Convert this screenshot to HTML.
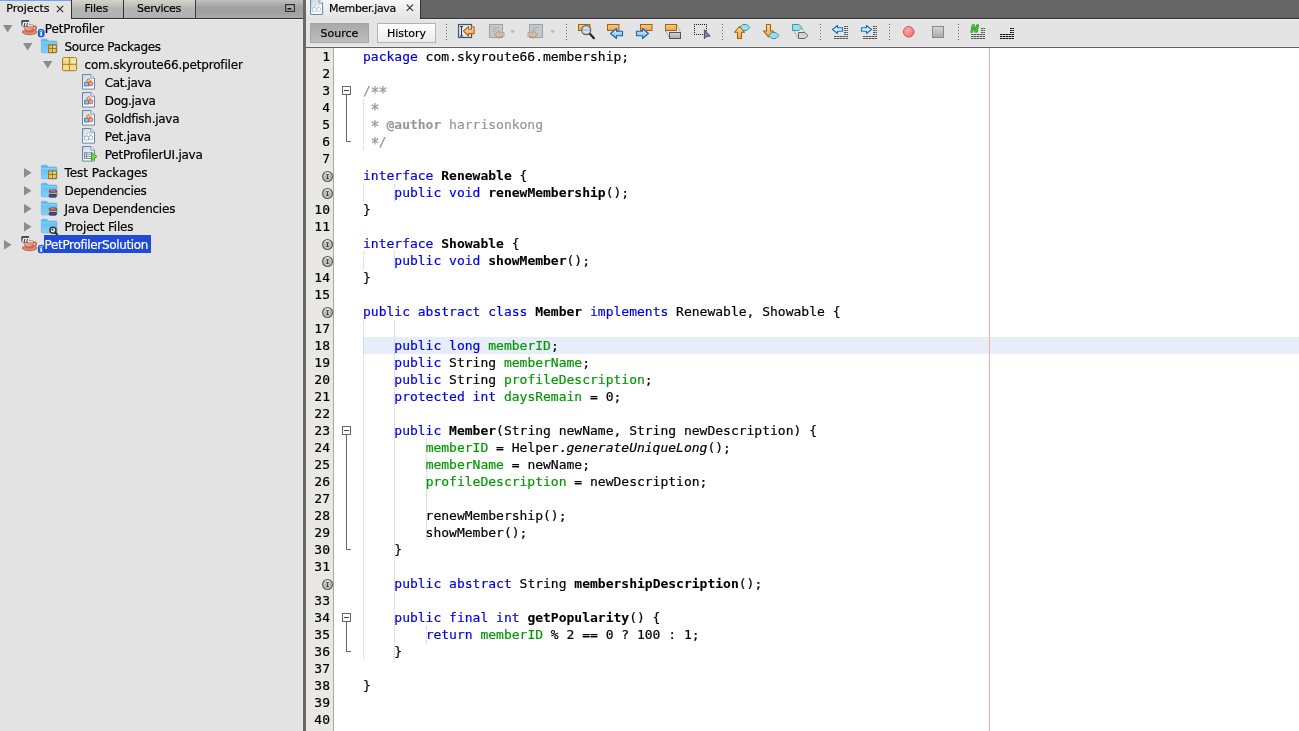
<!DOCTYPE html>
<html><head><meta charset="utf-8"><title>Member.java</title>
<style>
html,body{margin:0;padding:0}
body{width:1299px;height:731px;position:relative;overflow:hidden;background:#fff;-webkit-font-smoothing:antialiased;-webkit-text-stroke:0.2px;font-family:"DejaVu Sans","Liberation Sans",sans-serif}
.ab{position:absolute;display:block}
i{position:absolute;display:block}
#root{position:absolute;left:0;top:0;width:1299px;height:731px;will-change:transform}
#left{position:absolute;left:0;top:0;width:303px;height:731px;background:linear-gradient(#e3e3e3,#e3e3e3)}
#lhl{position:absolute;left:71px;top:19px;width:232px;height:1px;background:#eee}
#ltabs{position:absolute;left:0;top:0;width:303px;height:19px;background:linear-gradient(#c0c0c0 0,#a0a0a0 40%,#a1a1a1 70%,#aaa 100%);box-sizing:border-box;border-bottom:1px solid #333}
.tab{position:absolute;top:0;height:18px;box-sizing:border-box;font-size:11px;line-height:16px;color:#000;background:linear-gradient(#d3d4c5 0,#c5c5bd 25%,#b4b4b3 46%,#b2b2b2 100%);border-left:1px solid #333}
.tab span{position:absolute;top:1px;white-space:nowrap}
#tabP{left:0;width:71px;height:19px;background:#e3e3e3;border:0;border-top:1px solid #6ea4ec}
.tl{position:absolute;height:18px;line-height:18px;font-size:12px;white-space:nowrap;color:#000;letter-spacing:-0.28px}
.tl.sel{color:#fff}
.selbg{left:44px;top:235px;width:107px;height:18px;background:#1f4bd8}
#div{position:absolute;left:303px;top:0;width:3px;height:731px;background:#676767}
#etabs{position:absolute;left:306px;top:0;width:993px;height:19px;background:#666;box-sizing:border-box;border-bottom:1px solid #333}
#etab{position:absolute;left:0;top:0;width:114px;height:19px;background:linear-gradient(#f6f6f6,#e4e4e4);font-size:11px;border-right:1px solid #333}
#tbar{position:absolute;left:306px;top:19px;width:993px;height:29px;background:#e4e4e4;box-sizing:border-box;border-bottom:1px solid #606060;box-shadow:inset 0 -1px 0 #ebebeb}
.btn{position:absolute;top:23px;height:20px;box-sizing:border-box;border:1px solid #b4b4b4;font-size:11px;line-height:20px;text-align:center;color:#000}
#gut{position:absolute;left:306px;top:48px;width:28px;height:683px;background:#e9e8e2;overflow:visible;box-sizing:border-box;border-right:1px solid #aaa9a4}
.no{height:17px;line-height:17px;font:13px/17px "DejaVu Sans Mono","Liberation Mono",monospace;text-align:right;padding-right:3px;color:#000;position:relative}
.ii{position:absolute;left:16px;top:4px;overflow:visible;-webkit-text-stroke:0}
#code{position:absolute;left:363px;top:48px;width:936px;height:683px;font:13px/17px "DejaVu Sans Mono","Liberation Mono",monospace;color:#000;white-space:pre}
.ln{height:17px}
.hl{background:#e8eef9}
.k{color:#0000e6} .f{color:#009900} .c{color:#969696} .cb{color:#969696;font-weight:bold;-webkit-text-stroke:0.1px} .b{font-weight:bold;-webkit-text-stroke:0.1px} .i{font-style:italic}
.a{display:inline-block;transform:translateY(2px) scale(1.15)}
.g{width:1px;background:repeating-linear-gradient(#c9c9c9 0 1px,transparent 1px 2px)}
.fb{left:342px;width:9px;height:9px;box-sizing:border-box;border:1px solid #666;background:#fff}
.fb b{position:absolute;left:1px;top:3px;width:5px;height:1px;background:#444}
.fv{left:346px;width:1px;background:#666}
.fh{left:346px;width:5px;height:1px;background:#666}
#margin{position:absolute;left:989px;top:48px;width:1px;height:683px;background:#ffa9a9}
</style></head><body><div id="root">
<div id="left">
 <div id="ltabs">
  <div class="tab" id="tabP"><span style="left:6.200px;top:0">Projects</span><svg class="ab" style="left:56px;top:4px" width="8" height="8"><path d="M.8.8l6.4 6.4M7.2.8L.8 7.2" stroke="#333" stroke-width="1.2"/></svg></div>
  <div class="tab" style="left:71px;width:52px"><span style="left:12.5px;letter-spacing:-0.1px">Files</span></div>
  <div class="tab" style="left:123px;width:73px;border-right:1px solid #3c3c3c"><span style="left:13px;letter-spacing:-0.3px">Services</span></div>
  <svg class="ab" style="left:285px;top:4px" width="11" height="9"><rect x=".600" y=".600" width="8.800" height="6.800" fill="#adadad" stroke="#333" stroke-width="1.200"/><rect x="2.400" y="4" width="4" height="1.600" fill="#1c1c1c"/></svg>
 </div>
 <i id="lhl"></i><i class="selbg"></i><svg class="ab" style="left:3px;top:25px" width="10" height="8"><path d="M0 0h9.4L4.7 7.6z" fill="#8c8c8c"/></svg><span class="ab" style="left:20px;top:19px"><svg width="26" height="19" viewBox="0 0 26 19"><defs><linearGradient id="cupg" x1="0" y1="0" x2="1" y2="1"><stop offset="0" stop-color="#f6c3ae"/><stop offset="1" stop-color="#d9775a"/></linearGradient></defs><ellipse cx="9.6" cy="13" rx="7.2" ry="2.7" fill="#e08c70" stroke="#b05a40" stroke-width=".8"/><ellipse cx="9.4" cy="12.2" rx="4.2" ry="1.4" fill="#c86a4e"/><path d="M4.2 6.6h9.6c.3 3.2-1.2 5.8-4.8 5.8s-5.1-2.600-4.800-5.800z" fill="url(#cupg)" stroke="#b05a40" stroke-width=".8"/><path d="M13.6 7.400c3.200-.9 4 2.600.3 3.700" fill="none" stroke="#c0664a" stroke-width="1.500"/><ellipse cx="9" cy="6.700" rx="4.700" ry="1.200" fill="#f9dccf" stroke="#b05a40" stroke-width=".6"/><rect x="1.300" y="1" width="8" height="6.400" rx="1.400" fill="#3d4759"/><text x="2" y="6.600" font-family="DejaVu Sans,Liberation Sans,sans-serif" font-size="7.500" font-weight="bold" font-style="italic" fill="#fff" stroke="none">m</text><rect x="18.400" y="10.500" width="5.600" height="7.300" rx="1.800" fill="#2a6ee6" stroke="#0f48c0" stroke-width="1"/><ellipse cx="21.200" cy="11.800" rx="2" ry=".8" fill="#9cc4ff"/><rect x="20.300" y="13" width="1.700" height="3.800" fill="#e6f0ff"/></svg></span><span class="tl" style="left:44.8px;top:20px;letter-spacing:-0.18px">PetProfiler</span><svg class="ab" style="left:23px;top:43px" width="10" height="8"><path d="M0 0h9.4L4.7 7.6z" fill="#8c8c8c"/></svg><span class="ab" style="left:40px;top:37px"><svg width="18" height="18" viewBox="0 0 18 18"><defs><linearGradient id="fog" x1="0" y1="0" x2="0" y2="1"><stop offset="0" stop-color="#5ab9f2"/><stop offset="1" stop-color="#84d0f8"/></linearGradient></defs><path d="M1.300 3.400q0-1.200 1.200-1.200h3.800q.8 0 1.300.8l.7 1h7.500q1.200 0 1.200 1.200v9.400q0 1.200-1.200 1.200H2.500q-1.200 0-1.200-1.200z" fill="url(#fog)" stroke="#58b2ea" stroke-width=".6"/><path d="M1.700 5.300h14.900v.9H1.700z" fill="#93d6f9"/><rect x="8.700" y="8" width="7.600" height="7.600" fill="#eccb68" stroke="#94690f" stroke-width="1"/><path d="M12.500 8v7.600M8.700 11.400h7.600" stroke="#94690f" stroke-width=".9"/><rect x="13.500" y="9.300" width="2" height="1" fill="#fff6d0"/></svg></span><span class="tl" style="left:64.5px;top:38px;letter-spacing:-0.32px">Source Packages</span><svg class="ab" style="left:43px;top:61px" width="10" height="8"><path d="M0 0h9.4L4.7 7.6z" fill="#8c8c8c"/></svg><span class="ab" style="left:60px;top:55px"><svg width="19" height="18" viewBox="0 0 19 18"><defs><linearGradient id="pkg" x1="0" y1="0" x2="0" y2="1"><stop offset="0" stop-color="#f2d47c"/><stop offset="1" stop-color="#f6e0a0"/></linearGradient></defs><rect x="2.600" y="2.700" width="14" height="13" rx="1" fill="url(#pkg)" stroke="#a07c1c" stroke-width="1"/><path d="M9.400 2.700v13M2.600 9.300h14" stroke="#a8841f" stroke-width="1"/><path d="M3.400 3.600h5.300v1.200H3.400zM10.100 3.600h5.800v1.200h-5.800z" fill="#fbecb8"/><rect x="12" y="6.300" width="3" height="1.500" fill="#fffbe8"/></svg></span><span class="tl" style="left:84.5px;top:56px;letter-spacing:-0.17px">com.skyroute66.petprofiler</span><span class="ab" style="left:80px;top:73px"><svg width="18" height="18" viewBox="0 0 18 18"><defs><linearGradient id="fig" x1="0" y1="0" x2=".6" y2="1"><stop offset="0" stop-color="#c3d4e9"/><stop offset=".75" stop-color="#fbfcfe"/></linearGradient></defs><path d="M2.500 1.500h8.300l3.700 3.700v10.900h-12z" fill="url(#fig)" stroke="#6c83a3" stroke-width="1"/><path d="M10.800 1.500v3.700h3.700" fill="#eef3f9" stroke="#6c83a3" stroke-width=".8"/><rect x="4.700" y="9.200" width="4" height="3.800" fill="#8cc0f0" stroke="#3a6a9c" stroke-width=".8"/><path d="M8.500 5.300l2.300 2.300-2.300 2.300-2.300-2.300z" fill="#f9c860" stroke="#b06a14" stroke-width=".9"/><circle cx="10.800" cy="10.700" r="2.100" fill="#f4a0a0" stroke="#c84848" stroke-width=".8"/></svg></span><span class="tl" style="left:104.8px;top:74px;letter-spacing:-0.38px">Cat.java</span><span class="ab" style="left:80px;top:91px"><svg width="18" height="18" viewBox="0 0 18 18"><defs><linearGradient id="fig" x1="0" y1="0" x2=".6" y2="1"><stop offset="0" stop-color="#c3d4e9"/><stop offset=".75" stop-color="#fbfcfe"/></linearGradient></defs><path d="M2.500 1.500h8.300l3.700 3.700v10.900h-12z" fill="url(#fig)" stroke="#6c83a3" stroke-width="1"/><path d="M10.800 1.500v3.700h3.700" fill="#eef3f9" stroke="#6c83a3" stroke-width=".8"/><rect x="4.700" y="9.200" width="4" height="3.800" fill="#8cc0f0" stroke="#3a6a9c" stroke-width=".8"/><path d="M8.500 5.300l2.300 2.300-2.300 2.300-2.300-2.300z" fill="#f9c860" stroke="#b06a14" stroke-width=".9"/><circle cx="10.800" cy="10.700" r="2.100" fill="#f4a0a0" stroke="#c84848" stroke-width=".8"/></svg></span><span class="tl" style="left:104.8px;top:92px;letter-spacing:-0.31px">Dog.java</span><span class="ab" style="left:80px;top:109px"><svg width="18" height="18" viewBox="0 0 18 18"><defs><linearGradient id="fig" x1="0" y1="0" x2=".6" y2="1"><stop offset="0" stop-color="#c3d4e9"/><stop offset=".75" stop-color="#fbfcfe"/></linearGradient></defs><path d="M2.500 1.500h8.300l3.700 3.700v10.900h-12z" fill="url(#fig)" stroke="#6c83a3" stroke-width="1"/><path d="M10.800 1.500v3.700h3.700" fill="#eef3f9" stroke="#6c83a3" stroke-width=".8"/><rect x="4.700" y="9.200" width="4" height="3.800" fill="#8cc0f0" stroke="#3a6a9c" stroke-width=".8"/><path d="M8.500 5.300l2.300 2.300-2.300 2.300-2.300-2.300z" fill="#f9c860" stroke="#b06a14" stroke-width=".9"/><circle cx="10.800" cy="10.700" r="2.100" fill="#f4a0a0" stroke="#c84848" stroke-width=".8"/></svg></span><span class="tl" style="left:104.8px;top:110px;letter-spacing:-0.27px">Goldfish.java</span><span class="ab" style="left:80px;top:127px"><svg width="18" height="18" viewBox="0 0 18 18"><defs><linearGradient id="fig" x1="0" y1="0" x2=".6" y2="1"><stop offset="0" stop-color="#c3d4e9"/><stop offset=".75" stop-color="#fbfcfe"/></linearGradient></defs><path d="M2.500 1.500h8.300l3.700 3.700v10.900h-12z" fill="url(#fig)" stroke="#6c83a3" stroke-width="1"/><path d="M10.800 1.500v3.700h3.700" fill="#eef3f9" stroke="#6c83a3" stroke-width=".8"/><rect x="4.700" y="9.200" width="4" height="3.800" fill="#f6f9fd" stroke="#93a6bf" stroke-width=".8"/><path d="M8.500 5.300l2.300 2.300-2.300 2.300-2.300-2.300z" fill="#fff" stroke="#93a6bf" stroke-width=".8"/><circle cx="10.800" cy="10.700" r="2.100" fill="#fff" stroke="#93a6bf" stroke-width=".8"/></svg></span><span class="tl" style="left:104.8px;top:128px;letter-spacing:-0.21px">Pet.java</span><span class="ab" style="left:80px;top:145px"><svg width="18" height="18" viewBox="0 0 18 18"><defs><linearGradient id="fig" x1="0" y1="0" x2=".6" y2="1"><stop offset="0" stop-color="#c3d4e9"/><stop offset=".75" stop-color="#fbfcfe"/></linearGradient></defs><path d="M2.500 1.500h8.300l3.700 3.700v10.900h-12z" fill="url(#fig)" stroke="#6c83a3" stroke-width="1"/><path d="M10.800 1.500v3.700h3.700" fill="#eef3f9" stroke="#6c83a3" stroke-width=".8"/><rect x="4.300" y="7.800" width="7.500" height="5.700" fill="#fff" stroke="#5a6f8c" stroke-width=".8"/><path d="M4.300 9.700h7.500M4.300 11.600h7.500M6.600 7.800v5.700" stroke="#5a6f8c" stroke-width=".7"/><path d="M11.600 7.400l5.300 4.100-5.300 4.100z" fill="#7ad83a" stroke="#3c9a14" stroke-width=".9" stroke-linejoin="round"/></svg></span><span class="tl" style="left:104.8px;top:146px;letter-spacing:-0.26px">PetProfilerUI.java</span><svg class="ab" style="left:24px;top:167.6px" width="8" height="10"><path d="M0 0v9.400L7.600 4.700z" fill="#8c8c8c"/></svg><span class="ab" style="left:40px;top:163px"><svg width="18" height="18" viewBox="0 0 18 18"><defs><linearGradient id="fog" x1="0" y1="0" x2="0" y2="1"><stop offset="0" stop-color="#5ab9f2"/><stop offset="1" stop-color="#84d0f8"/></linearGradient></defs><path d="M1.300 3.400q0-1.200 1.200-1.200h3.800q.8 0 1.300.8l.7 1h7.500q1.200 0 1.200 1.200v9.400q0 1.200-1.200 1.200H2.500q-1.200 0-1.200-1.200z" fill="url(#fog)" stroke="#58b2ea" stroke-width=".6"/><path d="M1.700 5.300h14.900v.9H1.700z" fill="#93d6f9"/><rect x="8.700" y="8" width="7.600" height="7.600" fill="#eccb68" stroke="#94690f" stroke-width="1"/><path d="M12.500 8v7.600M8.700 11.400h7.600" stroke="#94690f" stroke-width=".9"/><rect x="13.500" y="9.300" width="2" height="1" fill="#fff6d0"/></svg></span><span class="tl" style="left:64.5px;top:164px;letter-spacing:-0.03px">Test Packages</span><svg class="ab" style="left:24px;top:185.6px" width="8" height="10"><path d="M0 0v9.400L7.600 4.700z" fill="#8c8c8c"/></svg><span class="ab" style="left:40px;top:181px"><svg width="18" height="18" viewBox="0 0 18 18"><defs><linearGradient id="fog" x1="0" y1="0" x2="0" y2="1"><stop offset="0" stop-color="#5ab9f2"/><stop offset="1" stop-color="#84d0f8"/></linearGradient></defs><path d="M1.300 3.400q0-1.200 1.200-1.200h3.800q.8 0 1.300.8l.7 1h7.500q1.200 0 1.200 1.200v9.400q0 1.200-1.200 1.200H2.500q-1.200 0-1.200-1.200z" fill="url(#fog)" stroke="#58b2ea" stroke-width=".6"/><path d="M1.700 5.300h14.900v.9H1.700z" fill="#93d6f9"/><rect x="9.300" y="8.900" width="7.400" height="2.700" rx="1.200" fill="#b04850" stroke="#6a2a32" stroke-width=".7"/><rect x="10" y="11.600" width="7" height="2" rx=".6" fill="#c9b880" stroke="#6a5c30" stroke-width=".7"/><rect x="9" y="13.600" width="7.400" height="2.600" rx="1.200" fill="#3f4f9a" stroke="#232a5a" stroke-width=".7"/><path d="M10.600 9.800h4.600" stroke="#e6b8bc" stroke-width=".7"/></svg></span><span class="tl" style="left:64.5px;top:182px;letter-spacing:-0.28px">Dependencies</span><svg class="ab" style="left:24px;top:203.6px" width="8" height="10"><path d="M0 0v9.400L7.600 4.700z" fill="#8c8c8c"/></svg><span class="ab" style="left:40px;top:199px"><svg width="18" height="18" viewBox="0 0 18 18"><defs><linearGradient id="fog" x1="0" y1="0" x2="0" y2="1"><stop offset="0" stop-color="#5ab9f2"/><stop offset="1" stop-color="#84d0f8"/></linearGradient></defs><path d="M1.300 3.400q0-1.200 1.200-1.200h3.800q.8 0 1.300.8l.7 1h7.500q1.200 0 1.200 1.200v9.400q0 1.200-1.200 1.200H2.500q-1.200 0-1.200-1.200z" fill="url(#fog)" stroke="#58b2ea" stroke-width=".6"/><path d="M1.700 5.300h14.900v.9H1.700z" fill="#93d6f9"/><rect x="9.300" y="8.900" width="7.400" height="2.700" rx="1.200" fill="#b04850" stroke="#6a2a32" stroke-width=".7"/><rect x="10" y="11.600" width="7" height="2" rx=".6" fill="#c9b880" stroke="#6a5c30" stroke-width=".7"/><rect x="9" y="13.600" width="7.400" height="2.600" rx="1.200" fill="#3f4f9a" stroke="#232a5a" stroke-width=".7"/><path d="M10.600 9.800h4.600" stroke="#e6b8bc" stroke-width=".7"/></svg></span><span class="tl" style="left:64.5px;top:200px;letter-spacing:-0.23px">Java Dependencies</span><svg class="ab" style="left:24px;top:221.6px" width="8" height="10"><path d="M0 0v9.400L7.600 4.700z" fill="#8c8c8c"/></svg><span class="ab" style="left:40px;top:217px"><svg width="18" height="18" viewBox="0 0 18 18"><defs><linearGradient id="fog" x1="0" y1="0" x2="0" y2="1"><stop offset="0" stop-color="#5ab9f2"/><stop offset="1" stop-color="#84d0f8"/></linearGradient></defs><path d="M1.300 3.400q0-1.200 1.200-1.200h3.800q.8 0 1.300.8l.7 1h7.500q1.200 0 1.200 1.200v9.400q0 1.200-1.200 1.200H2.500q-1.200 0-1.200-1.200z" fill="url(#fog)" stroke="#58b2ea" stroke-width=".6"/><path d="M1.700 5.300h14.900v.9H1.700z" fill="#93d6f9"/><circle cx="13" cy="13.200" r="3" fill="#fff" stroke="#333" stroke-width="1.500"/><circle cx="12.600" cy="12.800" r="1" fill="#333"/><path d="M15 15.300l2 2" stroke="#333" stroke-width="2.200" stroke-linecap="round"/></svg></span><span class="tl" style="left:64.5px;top:218px;letter-spacing:-0.18px">Project Files</span><svg class="ab" style="left:4px;top:239.6px" width="8" height="10"><path d="M0 0v9.400L7.600 4.700z" fill="#8c8c8c"/></svg><span class="ab" style="left:20px;top:235px"><svg width="26" height="19" viewBox="0 0 26 19"><defs><linearGradient id="cupg" x1="0" y1="0" x2="1" y2="1"><stop offset="0" stop-color="#f6c3ae"/><stop offset="1" stop-color="#d9775a"/></linearGradient></defs><ellipse cx="9.6" cy="13" rx="7.2" ry="2.7" fill="#e08c70" stroke="#b05a40" stroke-width=".8"/><ellipse cx="9.4" cy="12.2" rx="4.2" ry="1.4" fill="#c86a4e"/><path d="M4.2 6.6h9.6c.3 3.2-1.2 5.8-4.8 5.8s-5.1-2.600-4.800-5.800z" fill="url(#cupg)" stroke="#b05a40" stroke-width=".8"/><path d="M13.6 7.400c3.200-.9 4 2.600.3 3.700" fill="none" stroke="#c0664a" stroke-width="1.500"/><ellipse cx="9" cy="6.700" rx="4.700" ry="1.200" fill="#f9dccf" stroke="#b05a40" stroke-width=".6"/><rect x="1.300" y="1" width="8" height="6.400" rx="1.400" fill="#3d4759"/><text x="2" y="6.600" font-family="DejaVu Sans,Liberation Sans,sans-serif" font-size="7.500" font-weight="bold" font-style="italic" fill="#fff" stroke="none">m</text><rect x="18.400" y="10.500" width="5.600" height="7.300" rx="1.800" fill="#2a6ee6" stroke="#0f48c0" stroke-width="1"/><ellipse cx="21.200" cy="11.800" rx="2" ry=".8" fill="#9cc4ff"/><rect x="20.300" y="13" width="1.700" height="3.800" fill="#e6f0ff"/></svg></span><span class="tl sel" style="left:44.5px;top:236px;letter-spacing:-0.34px">PetProfilerSolution</span>
</div>
<div id="div"></div>
<div id="etabs"><div id="etab">
 <svg class="ab" style="left:4px;top:-1px" width="14" height="17" viewBox="0 0 14 17"><defs><linearGradient id="tfg" x1="0" y1="0" x2=".5" y2="1"><stop offset="0" stop-color="#bfd0e6"/><stop offset=".8" stop-color="#fbfcfe"/></linearGradient></defs><path d="M.6.5h8.4l3.600 3.600v11.300H.6z" fill="url(#tfg)" stroke="#6d83a3" stroke-width="1"/><path d="M9 .5v3.6h3.6" fill="#f4f8fc" stroke="#6d83a3" stroke-width=".8"/><rect x="2.600" y="8.800" width="3.600" height="3.400" fill="#fff" stroke="#9db0c8" stroke-width=".6"/><path d="M6.600 5l2.100 2.200-2.100 2.200-2.100-2.200z" fill="#fff" stroke="#9db0c8" stroke-width=".6"/><circle cx="8.700" cy="10.500" r="2" fill="#fff" stroke="#9db0c8" stroke-width=".6"/></svg>
 <span class="ab" style="left:23px;top:1px;line-height:16px;white-space:nowrap;letter-spacing:-0.36px">Member.java</span>
 <svg class="ab" style="left:99.5px;top:4.2px" width="8" height="8"><path d="M.7.7l6.2 6.2M6.9.7L.7 6.9" stroke="#333" stroke-width="1.2"/></svg>
</div></div>
<div id="tbar"><i style="left:114px;top:0;width:879px;height:1px;background:#efefef"></i></div>
<div class="btn" style="left:310px;width:59px;background:linear-gradient(#a9a9a9,#bdbdbd);border-color:#a6a6a6">Source</div>
<div class="btn" style="left:377px;width:59px;background:linear-gradient(#fefefe,#ececec)">History</div>
<svg class="ab" style="left:0;top:0" width="1299" height="48" viewBox="0 0 1299 48"><defs><linearGradient id="og" x1="0" y1="0" x2="0" y2="1"><stop offset="0" stop-color="#f8c98a"/><stop offset="1" stop-color="#f0a64a"/></linearGradient><linearGradient id="bg" x1="0" y1="0" x2="0" y2="1"><stop offset="0" stop-color="#e8f4ff"/><stop offset="1" stop-color="#6fb2f0"/></linearGradient><linearGradient id="gg" x1="0" y1="0" x2="0" y2="1"><stop offset="0" stop-color="#d8d8d8"/><stop offset="1" stop-color="#a8a8a8"/></linearGradient><radialGradient id="rg" cx=".4" cy=".35" r=".7"><stop offset="0" stop-color="#ffb0b0"/><stop offset="1" stop-color="#f46a6a"/></radialGradient><linearGradient id="ag" x1="0" y1="0" x2="0" y2="1"><stop offset="0" stop-color="#fde0a8"/><stop offset="1" stop-color="#f0a040"/></linearGradient></defs><path d="M446.5 24v17" stroke="#6e6e6e" stroke-width="1" stroke-dasharray="1 2"/><rect x="458.5" y="24.5" width="13" height="13" fill="#dbe8f8" stroke="#44546a" stroke-width="1.2"/><path d="M460 26.5h3M460 36h3M461.5 26.5v9.5" stroke="#333" stroke-width="1" fill="none"/><path d="M463.5 31l5-4.4v2.6h3v-2.4h2.6v6.8h-5.6v2.6z" fill="url(#ag)" stroke="#b0650c" stroke-width="1.1" stroke-linejoin="round"/><rect x="489.5" y="24.5" width="13" height="13" fill="#c6c8cc" stroke="#9a9ea6" stroke-width="1"/><path d="M492.5 27.5h7M492.5 29.5h4M492.5 31.5h3" stroke="#aeb2b8" stroke-width="1"/><rect x="529.5" y="24.5" width="13" height="13" fill="#c6c8cc" stroke="#9a9ea6" stroke-width="1"/><path d="M532.5 27.5h7M532.5 29.5h4M532.5 31.5h3" stroke="#aeb2b8" stroke-width="1"/><path d="M494.5 34.5L499.25 30.5V32.74H504.0V36.26H499.25V38.5z" fill="#d9c3a6" stroke="#b9a58c" stroke-width="1.1" stroke-linejoin="round"/><path d="M537.5 34.5L532.75 30.5V32.74H528V36.26H532.75V38.5z" fill="#d9c3a6" stroke="#b9a58c" stroke-width="1.1" stroke-linejoin="round"/><path d="M510 30h5.4l-2.7 3.6z" fill="#bdbdbd"/><path d="M550 30h5.4l-2.7 3.6z" fill="#bdbdbd"/><path d="M566.5 24v17" stroke="#6e6e6e" stroke-width="1" stroke-dasharray="1 2"/><rect x="578.5" y="24.5" width="11.5" height="6" fill="url(#og)" stroke="#a8600f" stroke-width="1"/><path d="M589.6 33.6l4.300 4.600" stroke="#222" stroke-width="2.200" stroke-linecap="round"/><circle cx="586.200" cy="30.100" r="4.500" fill="#d3e2ef" fill-opacity=".93" stroke="#566675" stroke-width="1.300"/><path d="M582.500 30h7.400" stroke="#a3b6c6" stroke-width="1"/><rect x="607.5" y="24.5" width="11.5" height="6" fill="url(#og)" stroke="#a8600f" stroke-width="1"/><path d="M610.5 33.5L616.5 28.5V31.3H622.5V35.7H616.5V38.5z" fill="url(#bg)" stroke="#1565b8" stroke-width="1.1" stroke-linejoin="round"/><rect x="640.5" y="24.5" width="11.5" height="6" fill="url(#og)" stroke="#a8600f" stroke-width="1"/><path d="M648.5 33.5L642.5 28.5V31.3H636.5V35.7H642.5V38.5z" fill="url(#bg)" stroke="#1565b8" stroke-width="1.1" stroke-linejoin="round"/><rect x="665.5" y="24.5" width="11" height="6" fill="url(#og)" stroke="#a8600f" stroke-width="1"/><rect x="669.5" y="32.5" width="11" height="6" fill="url(#gg)" stroke="#555" stroke-width="1"/><path d="M665.5 31l4 7M677 25l3.5 7" stroke="#666" stroke-width=".8" stroke-dasharray="1 1"/><path d="M694 24.500H707M694 34.500H707M694.500 24V35M706.500 24V35" fill="none" stroke="#1a1a1a" stroke-width="1" stroke-dasharray="1 1"/><path d="M704.400 29.800v8.800l2.300-2.100 3.500-.4z" fill="#7c8899" stroke="#3c4656" stroke-width=".9" stroke-linejoin="round"/><path d="M722.5 24v17" stroke="#6e6e6e" stroke-width="1" stroke-dasharray="1 2"/><path d="M742.4 24.5H746.8L749.8 27.5L746.8 30.5H742.4L739.8 27.5z" fill="#9adfe8" stroke="#3c98b0" stroke-width="1" stroke-linejoin="round"/><path d="M739.5 26.5L744.5 32.26H741.5V38.5H737.5V32.26H734.5z" fill="url(#ag)" stroke="#a8600f" stroke-width="1.1" stroke-linejoin="round"/><path d="M768.5 37.0L773.5 31.0H770.5V24.5H766.5V31.0H763.5z" fill="url(#ag)" stroke="#a8600f" stroke-width="1.1" stroke-linejoin="round"/><path d="M771.6 32.5H776L779 35.5L776 38.5H771.6L769 35.5z" fill="#9adfe8" stroke="#3c98b0" stroke-width="1" stroke-linejoin="round"/><path d="M792.5 24.5H798.8L802.0 27.5L798.8 30.5H792.5z" fill="#9adfe8" stroke="#3c98b0" stroke-width="1" stroke-linejoin="round"/><path d="M798.5 32.5H804.8L808.0 35.5L804.8 38.5H798.5z" fill="#d4d4d4" stroke="#666" stroke-width="1" stroke-linejoin="round"/><path d="M794 31.5l4 6.5M802 28l2 4" stroke="#555" stroke-width=".8" stroke-dasharray="1 1"/><path d="M820.5 24v17" stroke="#6e6e6e" stroke-width="1" stroke-dasharray="1 2"/><path d="M832.5 29.5L837.5 25.5V27.740000000000002H842.5V31.259999999999998H837.5V33.5z" fill="#d6ecff" stroke="#1b6fb8" stroke-width="1.1" stroke-linejoin="round"/><path d="M844 26.5H848" stroke="#555" stroke-width="1" stroke-dasharray="2.600 .4"/><path d="M844 28.5H848" stroke="#555" stroke-width="1" stroke-dasharray="2.600 .4"/><path d="M844 30.5H848" stroke="#555" stroke-width="1" stroke-dasharray="2.600 .4"/><path d="M844 32.5H848" stroke="#555" stroke-width="1" stroke-dasharray="2.600 .4"/><path d="M844 34.5H848" stroke="#555" stroke-width="1" stroke-dasharray="2.600 .4"/><path d="M834 36.5H848" stroke="#555" stroke-width="1" stroke-dasharray="2.600 .4"/><path d="M834 38.5H848" stroke="#555" stroke-width="1" stroke-dasharray="2.600 .4"/><path d="M871.5 29.5L866.5 25.5V27.740000000000002H861.5V31.259999999999998H866.5V33.5z" fill="#d6ecff" stroke="#1b6fb8" stroke-width="1.1" stroke-linejoin="round"/><path d="M873 26.5H877" stroke="#555" stroke-width="1" stroke-dasharray="2.600 .4"/><path d="M873 28.5H877" stroke="#555" stroke-width="1" stroke-dasharray="2.600 .4"/><path d="M873 30.5H877" stroke="#555" stroke-width="1" stroke-dasharray="2.600 .4"/><path d="M873 32.5H877" stroke="#555" stroke-width="1" stroke-dasharray="2.600 .4"/><path d="M873 34.5H877" stroke="#555" stroke-width="1" stroke-dasharray="2.600 .4"/><path d="M863 36.5H877" stroke="#555" stroke-width="1" stroke-dasharray="2.600 .4"/><path d="M863 38.5H877" stroke="#555" stroke-width="1" stroke-dasharray="2.600 .4"/><path d="M889.5 24v17" stroke="#6e6e6e" stroke-width="1" stroke-dasharray="1 2"/><circle cx="908.700" cy="31.800" r="5.300" fill="url(#rg)" stroke="#d85050" stroke-width="1"/><rect x="932.5" y="26.5" width="11" height="11" fill="url(#gg)" stroke="#8a8a8a" stroke-width="1"/><path d="M958.5 24v17" stroke="#6e6e6e" stroke-width="1" stroke-dasharray="1 2"/><text x="970.800" y="32.400" font-family="DejaVu Sans,Liberation Sans,sans-serif" font-size="9.500" font-weight="bold" font-style="italic" fill="#4cc02c" stroke="#0f7f0f" stroke-width="1" paint-order="stroke" style="-webkit-text-stroke:0">N</text><path d="M981 28.5H985" stroke="#555" stroke-width="1" stroke-dasharray="2.600 .4"/><path d="M981 30.5H985" stroke="#555" stroke-width="1" stroke-dasharray="2.600 .4"/><path d="M981 32.5H985" stroke="#555" stroke-width="1" stroke-dasharray="2.600 .4"/><path d="M971 34.5H985" stroke="#555" stroke-width="1" stroke-dasharray="2.600 .4"/><path d="M971 36.5H985" stroke="#555" stroke-width="1" stroke-dasharray="2.600 .4"/><path d="M971 38.5H985" stroke="#555" stroke-width="1" stroke-dasharray="2.600 .4"/><path d="M1010 28.5H1014" stroke="#111" stroke-width="1" stroke-dasharray="2.600 .4"/><path d="M1010 30.5H1014" stroke="#111" stroke-width="1" stroke-dasharray="2.600 .4"/><path d="M1010 32.5H1014" stroke="#111" stroke-width="1" stroke-dasharray="2.600 .4"/><path d="M1000 34.5H1014" stroke="#111" stroke-width="1" stroke-dasharray="2.600 .4"/><path d="M1000 36.5H1014" stroke="#111" stroke-width="1" stroke-dasharray="2.600 .4"/><path d="M1000 38.5H1014" stroke="#111" stroke-width="1" stroke-dasharray="2.600 .4"/></svg>
<svg width="0" height="0" style="position:absolute"><defs><linearGradient id="ig" x1="0" y1="0" x2="0" y2="1"><stop offset="0" stop-color="#ececec"/><stop offset=".5" stop-color="#b8b8b8"/><stop offset="1" stop-color="#d0d0d0"/></linearGradient></defs></svg><div id="gut"><div class="no">1</div><div class="no">2</div><div class="no">3</div><div class="no">4</div><div class="no">5</div><div class="no">6</div><div class="no">7</div><div class="no"><svg class="ii" width="12" height="12" viewBox="0 0 12 12"><circle cx="5.500" cy="5.500" r="4.950" fill="url(#ig)" stroke="#585858" stroke-width="1.100"/><text x="5.500" y="7.900" text-anchor="middle" font-family="DejaVu Sans Mono,Liberation Mono,monospace" font-weight="bold" font-size="6.500" fill="#3a3a3a">I</text></svg></div><div class="no"><svg class="ii" width="12" height="12" viewBox="0 0 12 12"><circle cx="5.500" cy="5.500" r="4.950" fill="url(#ig)" stroke="#585858" stroke-width="1.100"/><text x="5.500" y="7.900" text-anchor="middle" font-family="DejaVu Sans Mono,Liberation Mono,monospace" font-weight="bold" font-size="6.500" fill="#3a3a3a">I</text></svg></div><div class="no">10</div><div class="no">11</div><div class="no"><svg class="ii" width="12" height="12" viewBox="0 0 12 12"><circle cx="5.500" cy="5.500" r="4.950" fill="url(#ig)" stroke="#585858" stroke-width="1.100"/><text x="5.500" y="7.900" text-anchor="middle" font-family="DejaVu Sans Mono,Liberation Mono,monospace" font-weight="bold" font-size="6.500" fill="#3a3a3a">I</text></svg></div><div class="no"><svg class="ii" width="12" height="12" viewBox="0 0 12 12"><circle cx="5.500" cy="5.500" r="4.950" fill="url(#ig)" stroke="#585858" stroke-width="1.100"/><text x="5.500" y="7.900" text-anchor="middle" font-family="DejaVu Sans Mono,Liberation Mono,monospace" font-weight="bold" font-size="6.500" fill="#3a3a3a">I</text></svg></div><div class="no">14</div><div class="no">15</div><div class="no"><svg class="ii" width="12" height="12" viewBox="0 0 12 12"><circle cx="5.500" cy="5.500" r="4.950" fill="url(#ig)" stroke="#585858" stroke-width="1.100"/><text x="5.500" y="7.900" text-anchor="middle" font-family="DejaVu Sans Mono,Liberation Mono,monospace" font-weight="bold" font-size="6.500" fill="#3a3a3a">I</text></svg></div><div class="no">17</div><div class="no">18</div><div class="no">19</div><div class="no">20</div><div class="no">21</div><div class="no">22</div><div class="no">23</div><div class="no">24</div><div class="no">25</div><div class="no">26</div><div class="no">27</div><div class="no">28</div><div class="no">29</div><div class="no">30</div><div class="no">31</div><div class="no"><svg class="ii" width="12" height="12" viewBox="0 0 12 12"><circle cx="5.500" cy="5.500" r="4.950" fill="url(#ig)" stroke="#585858" stroke-width="1.100"/><text x="5.500" y="7.900" text-anchor="middle" font-family="DejaVu Sans Mono,Liberation Mono,monospace" font-weight="bold" font-size="6.500" fill="#3a3a3a">I</text></svg></div><div class="no">33</div><div class="no">34</div><div class="no">35</div><div class="no">36</div><div class="no">37</div><div class="no">38</div><div class="no">39</div><div class="no">40</div></div>
<i class="hl" style="left:363px;top:337px;width:936px;height:17px"></i>
<i class="g" style="left:363px;top:99px;height:51px"></i><i class="g" style="left:363px;top:184px;height:17px"></i><i class="g" style="left:394px;top:184px;height:17px"></i><i class="g" style="left:363px;top:252px;height:17px"></i><i class="g" style="left:394px;top:252px;height:17px"></i><i class="g" style="left:363px;top:320px;height:340px"></i><i class="g" style="left:394px;top:320px;height:340px"></i><i class="g" style="left:426px;top:439px;height:102px"></i><i class="g" style="left:426px;top:626px;height:17px"></i>
<div id="margin"></div>
<i class="fb" style="top:86px"><b></b></i><i class="fv" style="top:95px;height:47px"></i><i class="fh" style="top:141px"></i><i class="fb" style="top:426px"><b></b></i><i class="fv" style="top:435px;height:115px"></i><i class="fh" style="top:549px"></i><i class="fb" style="top:613px"><b></b></i><i class="fv" style="top:622px;height:30px"></i><i class="fh" style="top:651px"></i>
<div id="code"><div class="ln"><span class="k">package</span> com.skyroute66.membership;</div><div class="ln"></div><div class="ln"><span class="c">/<span class="a">*</span><span class="a">*</span></span></div><div class="ln"><span class="c"> <span class="a">*</span></span></div><div class="ln"><span class="c"> <span class="a">*</span> </span><span class="cb">@author</span><span class="c"> harrisonkong</span></div><div class="ln"><span class="c"> <span class="a">*</span>/</span></div><div class="ln"></div><div class="ln"><span class="k">interface</span> <span class="b">Renewable</span> {</div><div class="ln">    <span class="k">public</span> <span class="k">void</span> <span class="b">renewMembership</span>();</div><div class="ln">}</div><div class="ln"></div><div class="ln"><span class="k">interface</span> <span class="b">Showable</span> {</div><div class="ln">    <span class="k">public</span> <span class="k">void</span> <span class="b">showMember</span>();</div><div class="ln">}</div><div class="ln"></div><div class="ln"><span class="k">public</span> <span class="k">abstract</span> <span class="k">class</span> <span class="b">Member</span> <span class="k">implements</span> Renewable, Showable {</div><div class="ln"></div><div class="ln">    <span class="k">public</span> <span class="k">long</span> <span class="f">memberID</span>;</div><div class="ln">    <span class="k">public</span> String <span class="f">memberName</span>;</div><div class="ln">    <span class="k">public</span> String <span class="f">profileDescription</span>;</div><div class="ln">    <span class="k">protected</span> <span class="k">int</span> <span class="f">daysRemain</span> = 0;</div><div class="ln"></div><div class="ln">    <span class="k">public</span> <span class="b">Member</span>(String newName, String newDescription) {</div><div class="ln">        <span class="f">memberID</span> = Helper.<span class="i">generateUniqueLong</span>();</div><div class="ln">        <span class="f">memberName</span> = newName;</div><div class="ln">        <span class="f">profileDescription</span> = newDescription;</div><div class="ln"></div><div class="ln">        renewMembership();</div><div class="ln">        showMember();</div><div class="ln">    }</div><div class="ln"></div><div class="ln">    <span class="k">public</span> <span class="k">abstract</span> String <span class="b">membershipDescription</span>();</div><div class="ln"></div><div class="ln">    <span class="k">public</span> <span class="k">final</span> <span class="k">int</span> <span class="b">getPopularity</span>() {</div><div class="ln">        <span class="k">return</span> <span class="f">memberID</span> % 2 == 0 ? 100 : 1;</div><div class="ln">    }</div><div class="ln"></div><div class="ln">}</div><div class="ln"></div><div class="ln"></div></div>
</div></body></html>
